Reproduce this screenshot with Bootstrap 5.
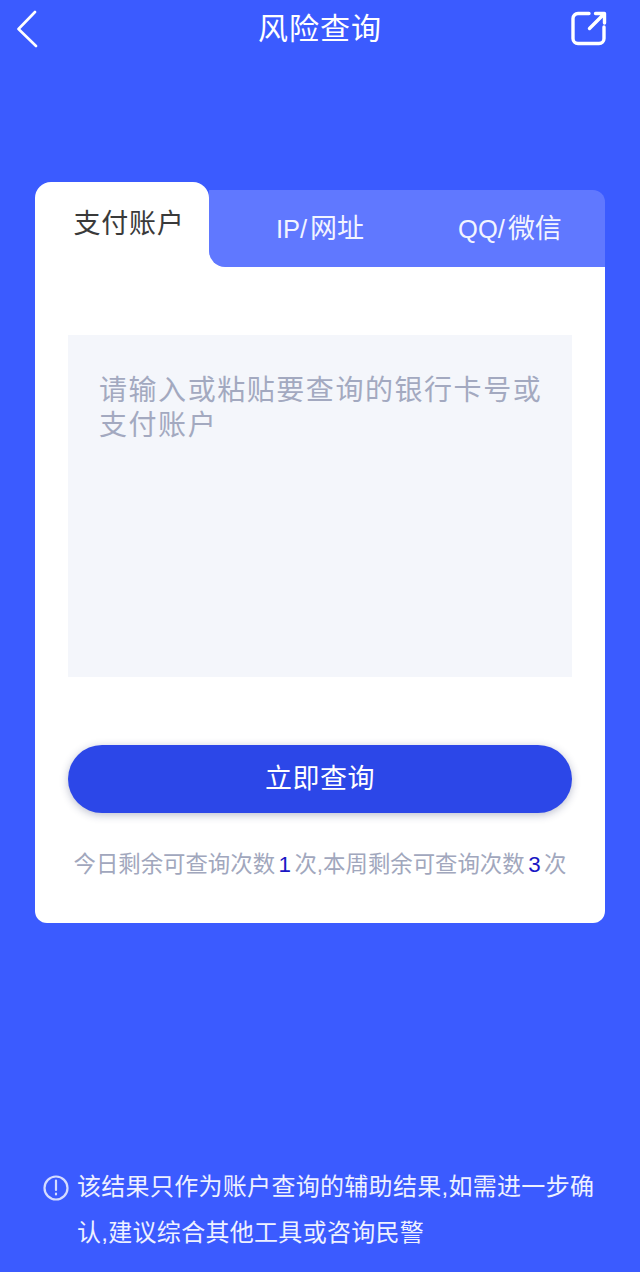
<!DOCTYPE html>
<html lang="zh-CN">
<head>
<meta charset="utf-8">
<title>风险查询</title>
<link href="https://cdn.jsdelivr.net/npm/bootstrap@5.3.0/dist/css/bootstrap.min.css" rel="stylesheet">
<style>
html,body{height:100%}
body{background:#3b5bff;font-family:"Liberation Sans","Noto Sans CJK SC",sans-serif;color:#fff}
.screen{height:1272px;overflow:hidden}
.topbar{height:58px;padding:0 33px 0 17px}
.slot-back{width:56px}
.slot-share{width:40px}
.top-title{font-size:30px;letter-spacing:1px;line-height:58px}
.panel{margin:124px 35px 0;width:570px;height:741px;position:relative}
.tabstrip{height:85px}
.tab-on{width:174px;height:85px;background:#fff;color:#3a3a3a;font-size:27px;letter-spacing:.7px;border-radius:16px 16px 0 0;padding-left:14px}
.tab-rest{height:77px;background:#6078ff;border-radius:0 12px 0 16px;font-size:25.5px;color:#f2f4ff;padding-top:2px}
.tab-a{width:222px;text-align:center}
.tab-b{width:158px;text-align:center}
.tab-cn{font-size:27px;margin-left:3px}
.panel-body{background:#fff;border-radius:0 0 12px 12px;height:656px;padding:68px 33px 0}
.tab-gap{background:#fff;position:absolute;left:174px;right:0;top:60px;height:25px;z-index:-1}
.queryarea{height:342px;background:#f4f6fb;border:0;border-radius:0;font-size:28px;letter-spacing:1.55px;line-height:35px;padding:38px 28px 0 31px;color:#333;resize:none}
.queryarea::placeholder{color:#a3a9c0}
.go-btn{height:68px;margin-top:68px;background:#2c47e8;border:0;border-radius:34px;color:#fff;font-size:27px;letter-spacing:.5px;box-shadow:0 2px 8px rgba(30,40,90,.3)}
.go-btn:hover{background:#2c47e8;color:#fff}
.quota{margin-top:38px;font-size:22.4px;line-height:28px;color:#a1a7bd;white-space:nowrap}
.quota b{font-weight:400;color:#1a16c4;margin:0 3.5px}
.notice{position:relative;margin-top:auto;padding:0 40px 16px 43px;font-size:24px;line-height:46px;letter-spacing:.3px;color:#eef1ff}
.notice svg{flex:none;margin-top:11px}
</style>
</head>
<body>
<div class="screen d-flex flex-column">
  <header class="topbar d-flex align-items-center justify-content-between">
    <div class="slot-back d-flex"><svg width="24" height="38" viewBox="0 0 24 38" fill="none" stroke="#fff" stroke-width="2.6" stroke-linecap="round" stroke-linejoin="round"><path d="M18 2 1.5 19 19 36"/></svg></div>
    <div class="top-title">风险查询</div>
    <div class="slot-share d-flex justify-content-end"><svg width="36" height="36" viewBox="0 0 36 36" fill="none" stroke="#fff" stroke-width="3.4" stroke-linecap="round" stroke-linejoin="round"><path d="M18 2.5H7a5 5 0 0 0-5 5v20a5 5 0 0 0 5 5h21a5 5 0 0 0 5-5V16"/><path d="M18.500 17.500 33 3M24.500 2.500h9V12"/></svg></div>
  </header>
  <main class="panel">
    <div class="tab-gap"></div>
    <div class="tabstrip d-flex">
      <div class="tab-on d-flex align-items-center justify-content-center flex-none">支付账户</div>
      <div class="flex-grow-1 d-flex flex-column justify-content-end">
        <div class="tab-rest d-flex align-items-center"><span class="tab-a">IP/<span class="tab-cn">网址</span></span><span class="tab-b">QQ/<span class="tab-cn">微信</span></span></div>
      </div>
    </div>
    <div class="panel-body">
      <textarea class="form-control queryarea" placeholder="请输入或粘贴要查询的银行卡号或支付账户"></textarea>
      <button type="button" class="btn go-btn w-100">立即查询</button>
      <p class="quota text-center mb-0">今日剩余可查询次数<b>1</b>次,本周剩余可查询次数<b>3</b>次</p>
    </div>
  </main>
  <footer class="notice d-flex gap-2">
    <svg width="26" height="26" viewBox="0 0 26 26" fill="none" stroke="#d5dcff" stroke-width="2.2"><circle cx="13" cy="13" r="11.500"/><path d="M13 5.500V15M13 18.500v1" stroke-linecap="round"/></svg>
    <div>该结果只作为账户查询的辅助结果,如需进一步确认,建议综合其他工具或咨询民警</div>
  </footer>
</div>
<script src="https://cdn.jsdelivr.net/npm/bootstrap@5.3.0/dist/js/bootstrap.bundle.min.js"></script>
</body>
</html>
